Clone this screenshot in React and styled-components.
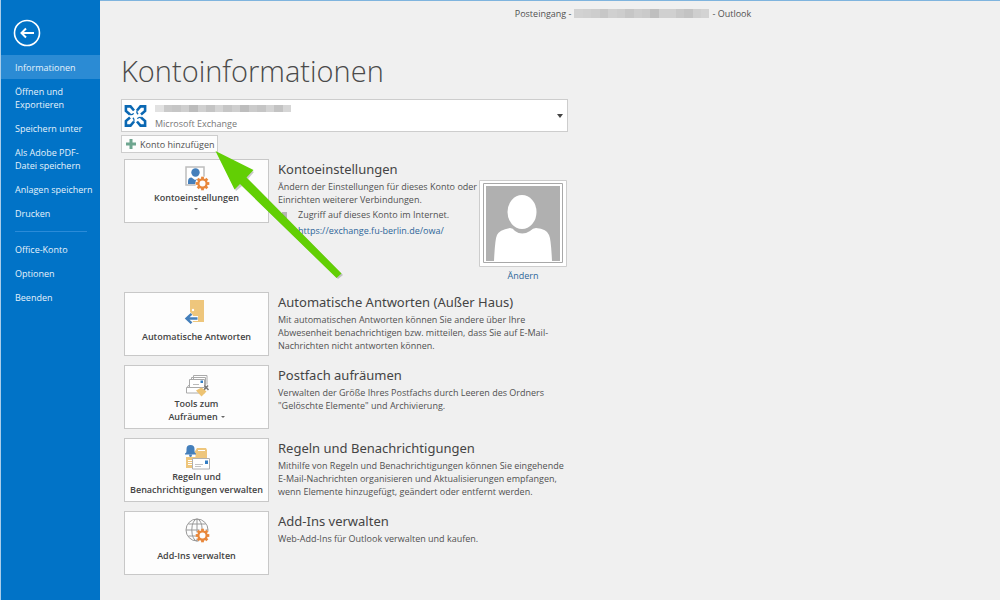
import React from "react";
import styled, { createGlobalStyle } from "styled-components";

const GlobalStyle = createGlobalStyle`
  * { box-sizing: border-box; }
  html, body, #root { min-height: 100vh; }
  body {
    margin: 0;
    background: #f0f0f0;
    color: #505050;
    font-family: "Open Sans", "Noto Sans", sans-serif;
    font-size: 9px;
    line-height: 13px;
  }
  button, select { font: inherit; color: inherit; }
  h1, h2, p { margin: 0; }
`;

const Page = styled.div`
  display: flex;
  min-height: 100vh;
`;

const Sidebar = styled.nav`
  flex: 0 0 100px;
  border-left: 1px solid #a9cdea;
  background: #0173c7;
  color: #e6f2fb;
`;

const BackButton = styled.button`
  display: block;
  margin: 19px 0 8px 12px;
  padding: 0;
  border: 0;
  background: none;
  width: 28px;
  height: 28px;
  svg { display: block; }
`;

const NavItem = styled.a`
  display: block;
  padding: 6px 4px 5px 14px;
  color: inherit;
  text-decoration: none;
  white-space: nowrap;
  background: ${(p) => (p.$active ? "#2b8bd4" : "transparent")};
`;

const NavRule = styled.hr`
  height: 1px;
  margin: 6px 13px 5px 14px;
  border: 0;
  background: #2b8bd8;
`;

const Main = styled.main`
  flex: 1;
  min-width: 0;
  border-top: 1px solid #7fb4de;
`;

const TitleBar = styled.header`
  display: flex;
  align-items: center;
  justify-content: center;
  gap: 3px;
  padding: 6px 0;
  margin-left: 166px;
`;

const Redacted = styled.span`
  display: flex;
  width: ${(p) => p.$width}px;
  height: ${(p) => p.$height}px;
`;

const Block = styled.i`
  flex: 1;
  background: ${(p) => p.$tone};
`;

const Content = styled.div`
  max-width: 490px;
  padding: 0 22px 24px 21px;
`;

const Title = styled.h1`
  margin: 26px 0 9px;
  font-size: 29px;
  line-height: 38px;
  font-weight: 300;
  color: #4a4a4a;
`;

const Account = styled.div`
  display: grid;
  grid-template-columns: 33px 1fr 10px;
  align-items: center;
  height: 33px;
  border: 1px solid #cdcdcd;
  background: #fff;
  > svg { grid-row: 1; pointer-events: none; }
`;

const AccountSelect = styled.select`
  grid-area: 1 / 1 / 2 / 4;
  width: 100%;
  height: 31px;
  padding: 16px 14px 0 33px;
  border: 0;
  background: transparent;
  appearance: none;
  color: #777;
`;

const AccountName = styled.span`
  grid-area: 1 / 2;
  align-self: start;
  padding-top: 5px;
  pointer-events: none;
`;

const AddButton = styled.button`
  display: flex;
  align-items: center;
  gap: 3px;
  height: 18px;
  margin: 3px 0 6px;
  padding: 0 3px;
  border: 1px solid #cdcdcd;
  background: #fdfdfd;
`;

const Row = styled.section`
  display: grid;
  grid-template-columns: 145px minmax(0, 1fr) auto;
  gap: 9px;
  align-items: start;
  min-height: ${(p) => (p.$tall ? 124 : 64)}px;
  margin: 0 1px 9px 3px;
`;

const Tile = styled.button`
  display: flex;
  flex-direction: column;
  align-items: center;
  justify-content: flex-start;
  height: 64px;
  padding: 5px 2px 0;
  border: 1px solid #c8c8c8;
  background: #fdfdfd;
  font-weight: 600;
  color: #444;
  svg { flex: none; }
`;

const TileLabel = styled.span`
  display: block;
  margin-top: ${(p) => (p.$spaced ? 6 : 0)}px;
`;

const Caret = styled.i`
  display: ${(p) => (p.$block ? "block" : "inline-block")};
  margin: ${(p) => (p.$block ? "4px auto 0" : "0 0 2px 3px")};
  width: 0;
  border: 2px solid transparent;
  border-top-color: #666;
  border-bottom: 0;
`;

const Info = styled.div`
  padding-top: 1px;
  white-space: nowrap;
`;

const Heading = styled.h2`
  margin-bottom: 2px;
  font-family: "Noto Sans", "Open Sans", sans-serif;
  font-size: 13px;
  line-height: 18px;
  font-weight: 400;
  color: #444;
`;

const Bullets = styled.ul`
  margin: 1px 0 0;
  padding: 0;
  list-style: none;
`;

const Bullet = styled.li`
  display: flex;
  align-items: center;
  gap: 11px;
  line-height: 16px;
  &::before {
    content: "";
    width: 5px;
    height: 6px;
    margin-left: 4px;
    background: ${(p) => (p.$plain ? "transparent" : "#b5b5b5")};
  }
`;

const Link = styled.a`
  color: #2e6699;
  text-decoration: none;
`;

const Profile = styled.div`
  display: flex;
  flex-direction: column;
  align-items: center;
  gap: 2px;
  padding-top: 21px;
  svg { display: block; }
`;

const Pointer = styled.svg`
  position: absolute;
  left: 210px;
  top: 146px;
  pointer-events: none;
`;

const Gear = ({ x, y }) => (
  <g transform={`translate(${x} ${y})`}>
    {[0, 45, 90, 135].map((a) => (
      <rect key={a} x="-1.4" y="-6.8" width="2.8" height="13.6" fill="#e8873a" transform={`rotate(${a})`} />
    ))}
    <circle r="4.1" fill="#fdfdfd" stroke="#e8873a" strokeWidth="2.2" />
  </g>
);

const AccountIcon = () => (
  <svg width="26" height="26" viewBox="0 0 26 26">
    <rect x="2" y="2" width="18" height="18" fill="#fff" stroke="#bdbdbd" strokeWidth="1.500" />
    <circle cx="11.500" cy="7.500" r="4.200" fill="#447fbb" />
    <path d="M4 19v-2.500q0-4 3.500-4l3.500 2.500 3-1.500V19z" fill="#447fbb" />
    <circle cx="18.500" cy="18.500" r="7.200" fill="#fdfdfd" />
    <Gear x={18.5} y={18.5} />
  </svg>
);

const DoorIcon = () => (
  <svg width="26" height="26" viewBox="0 0 26 26">
    <path d="M6 2h14v22H6z" fill="#eec67c" />
    <circle cx="9" cy="12" r="1.200" fill="#fff" />
    <path d="M14 20.500H2M7.500 15.500l-5.500 5 5.500 5" fill="none" stroke="#fdfdfd" strokeWidth="5" />
    <path d="M13.500 20.500H2.500M7.500 15.800l-5 4.700 5 4.700" fill="none" stroke="#447fbb" strokeWidth="2.400" />
  </svg>
);

const CleanupIcon = () => (
  <svg width="26" height="26" viewBox="0 0 26 26">
    <g fill="#fff" stroke="#aaa">
      <path d="M9.500 10V4.500h13.500v9M7.500 8V6.500H21.500v8" />
      <path d="M2.500 22v-5L5.500 13.500h15V22z" />
      <path d="M2.500 16.500h16" />
      <path d="M5.500 8.500h15v8h-15z" />
    </g>
    <path d="M9 13.500h6" stroke="#bbb" />
    <path d="M16.500 9.500h2.500v2.500h-2.500z" fill="#337ec4" />
    <path d="M24 14.500l-4.500 5M20.500 14.500l4 4.500" stroke="#777" strokeWidth="1.500" />
    <path d="M12 19.500l5.500-3 5 4-5 5z" fill="#edc373" />
  </svg>
);

const RulesIcon = () => (
  <svg width="26" height="26" viewBox="0 0 26 26">
    <path d="M2 24V9h8l3-5h9l1 2v18z" fill="#eec67c" />
    <path d="M14 6.500h7" stroke="#fff" />
    <path d="M1 9.500h10.500v3.500H1z" fill="#fdfdfd" />
    <path d="M1 9.500q1.500-.5 1.500-2.500V5q0-4 4-4t4 4v2q0 2 1.500 2.500v1H1z" fill="#447fbb" />
    <path d="M5 10.500h3q0 2.500-1.500 2.500T5 10.500z" fill="#447fbb" />
    <path d="M4 16.500h5M4 18.500h4M4 20.500h4" stroke="#fff" />
    <path d="M8.500 14.500h17v10.500h-17z" fill="#fff" stroke="#b0b0b0" />
    <path d="M11 20.500h8M11 22.500h6" stroke="#c4c4c4" />
    <path d="M21 16.500h3v3.500h-3z" fill="#337ec4" />
  </svg>
);

const GlobeIcon = () => (
  <svg width="26" height="26" viewBox="0 0 26 26">
    <g fill="none" stroke="#999">
      <circle cx="13" cy="13" r="11" />
      <ellipse cx="13" cy="13" rx="5.200" ry="11" />
      <path d="M13 2v22M2 13h22M4.500 7h17M4.500 19h17" />
    </g>
    <circle cx="18.500" cy="18.500" r="6.800" fill="#fdfdfd" />
    <Gear x={18.5} y={18.5} />
  </svg>
);

const ExchangeLogo = () => (
  <svg width="28" height="24" viewBox="0 0 28 24" style={{ gridColumn: 1 }}>
    <g transform="translate(13.500 12)" fill="none" stroke="#0b68b3">
      {[0, 90, 180, 270].map((a) => (
        <g key={a} transform={`rotate(${a})`}>
          <path d="M-5.500 -1.500L-9.600 -5V-9.600H-5L-1.500 -5.500" strokeWidth="2.600" />
          <path d="M-2.500 -6.500Q-1.500 -3.500 -4.500 -.5" strokeWidth="1" opacity=".0" />
          <path d="M-5.500 -1.500Q-3.500 -.8 -1.800 -2.600" strokeWidth="1.300" />
        </g>
      ))}
    </g>
  </svg>
);

const Mosaic = ({ tones, width, height }) => (
  <Redacted $width={width} $height={height} aria-hidden="true">
    {tones.map((t, i) => <Block key={i} $tone={t} />)}
  </Redacted>
);

const TITLE_TONES = ["#d2d2d2", "#d0d0d0", "#cdcdcd", "#c7c7c7", "#d0d0d0", "#cdcdcd", "#c6c6c6", "#cdcdcd", "#cacaca", "#bfbfbf", "#d0d0d0", "#d0d0d0", "#c8c8c8", "#c3c3c3", "#cfcfcf", "#d3d3d3"];
const NAME_TONES = ["#e2e2e2", "#cacaca", "#c6c6c6", "#cfcfcf", "#bcbcbc", "#d0d0d0", "#c4c4c4", "#d4d4d4", "#c6c6c6", "#cfcfcf", "#bdbdbd", "#cbcbcb", "#c5c5c5", "#d3d3d3", "#c3c3c3", "#d6d6d6"];

const NAV = [
  ["Informationen"],
  ["Öffnen und", "Exportieren"],
  ["Speichern unter"],
  ["Als Adobe PDF-", "Datei speichern"],
  ["Anlagen speichern"],
  ["Drucken"],
  null,
  ["Office-Konto"],
  ["Optionen"],
  ["Beenden"],
];

const Lines = ({ lines }) =>
  lines.map((l, i) => (
    <React.Fragment key={l}>
      {i > 0 && <br />}
      {l}
    </React.Fragment>
  ));

const SECTIONS = [
  {
    icon: <DoorIcon />,
    label: ["Automatische Antworten"],
    title: "Automatische Antworten (Außer Haus)",
    text: ["Mit automatischen Antworten können Sie andere über Ihre", "Abwesenheit benachrichtigen bzw. mitteilen, dass Sie auf E-Mail-", "Nachrichten nicht antworten können."],
  },
  {
    icon: <CleanupIcon />,
    label: ["Tools zum", "Aufräumen"],
    menu: true,
    title: "Postfach aufräumen",
    text: ["Verwalten der Größe Ihres Postfachs durch Leeren des Ordners", "\"Gelöschte Elemente\" und Archivierung."],
  },
  {
    icon: <RulesIcon />,
    label: ["Regeln und", "Benachrichtigungen verwalten"],
    title: "Regeln und Benachrichtigungen",
    text: ["Mithilfe von Regeln und Benachrichtigungen können Sie eingehende", "E-Mail-Nachrichten organisieren und Aktualisierungen empfangen,", "wenn Elemente hinzugefügt, geändert oder entfernt werden."],
  },
  {
    icon: <GlobeIcon />,
    label: ["Add-Ins verwalten"],
    title: "Add-Ins verwalten",
    text: ["Web-Add-Ins für Outlook verwalten und kaufen."],
  },
];

export default function App() {
  return (
    <>
      <GlobalStyle />
      <Page>
        <Sidebar>
          <BackButton aria-label="Zurück">
            <svg width="28" height="28" viewBox="0 0 28 28" fill="none" stroke="#fff">
              <circle cx="14" cy="14" r="12.500" strokeWidth="1.600" />
              <path d="M21 14H9M13 9.500L8.500 14l4.500 4.500" strokeWidth="2" />
            </svg>
          </BackButton>
          {NAV.map((item, i) =>
            item ? (
              <NavItem key={i} href="#" $active={i === 0}><Lines lines={item} /></NavItem>
            ) : (
              <NavRule key={i} />
            )
          )}
        </Sidebar>
        <Main>
          <TitleBar>
            <span>Posteingang -</span>
            <Mosaic tones={TITLE_TONES} width={135} height={9} />
            <span>- Outlook</span>
          </TitleBar>
          <Content>
            <Title>Kontoinformationen</Title>
            <Account>
              <ExchangeLogo />
              <AccountName><Mosaic tones={NAME_TONES} width={136} height={7} /></AccountName>
              <AccountSelect aria-label="Konto" defaultValue="exchange">
                <option value="exchange">Microsoft Exchange</option>
              </AccountSelect>
              <svg width="6" height="4" viewBox="0 0 6 4" style={{ gridColumn: 3 }}>
                <path d="M0 0h6L3 4z" fill="#444" />
              </svg>
            </Account>
            <AddButton>
              <svg width="12" height="12" viewBox="0 0 12 12">
                <path d="M6 1v10M1 6h10" stroke="#6fa690" strokeWidth="3" />
              </svg>
              Konto hinzufügen
            </AddButton>
            <Row $tall>
              <Tile>
                <AccountIcon />
                <TileLabel>Kontoeinstellungen<Caret $block /></TileLabel>
              </Tile>
              <Info>
                <Heading>Kontoeinstellungen</Heading>
                <p>Ändern der Einstellungen für dieses Konto oder<br />Einrichten weiterer Verbindungen.</p>
                <Bullets>
                  <Bullet>Zugriff auf dieses Konto im Internet.</Bullet>
                  <Bullet $plain><Link href="#">https://exchange.fu-berlin.de/owa/</Link></Bullet>
                </Bullets>
              </Info>
              <Profile>
                <svg width="88" height="87" viewBox="0 0 88 87">
                  <path d="M.5.5h87v86H.5z" fill="#fff" stroke="#cdcdcd" />
                  <path d="M4.500 3.500h79v79h-79z" fill="#fff" stroke="#a8a8a8" />
                  <path d="M7 6h74v75H7z" fill="#b0b0b0" />
                  <ellipse cx="43" cy="32" rx="14.500" ry="17" fill="#fff" />
                  <path d="M15 81q1-22 3-26 2-5 13-7 3 0 5 3 7 5 15 0 3-3 6-3 11 1 13 7 2 4 3 26z" fill="#fff" />
                </svg>
                <Link href="#">Ändern</Link>
              </Profile>
            </Row>
            {SECTIONS.map((s) => (
              <Row key={s.title}>
                <Tile>
                  {s.icon}
                  <TileLabel $spaced={s.label.length === 1}>
                    <Lines lines={s.label} />
                    {s.menu && <Caret />}
                  </TileLabel>
                </Tile>
                <Info>
                  <Heading>{s.title}</Heading>
                  <p><Lines lines={s.text} /></p>
                </Info>
              </Row>
            ))}
          </Content>
        </Main>
      </Page>
      <Pointer width="140" height="140" viewBox="210 146 140 140" aria-hidden="true">
        <path d="M217 153L254 172 248 179 343 275 338 279 242 186 236 191z" fill="#000" opacity=".2" />
        <path d="M215.500 151L253.500 170 246.500 177.500 341.500 273.500 336.500 278 240 184 234.500 189.500z" fill="#62cf04" />
      </Pointer>
    </>
  );
}
